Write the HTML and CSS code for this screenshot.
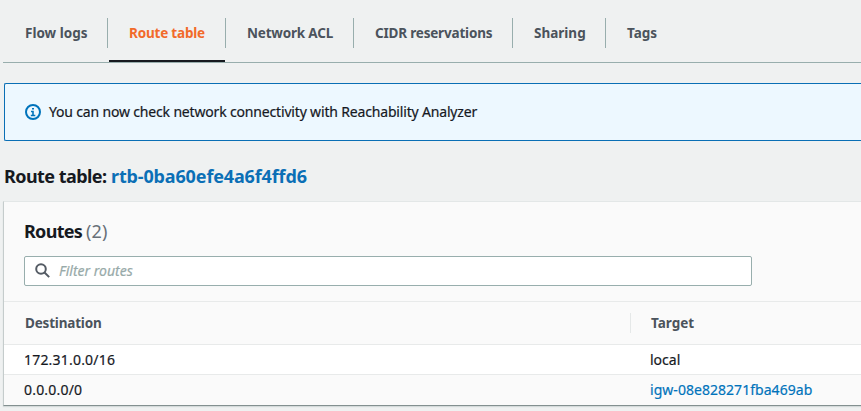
FILE: index.html
```html
<!DOCTYPE html>
<html lang="en">
<head>
<meta charset="utf-8">
<title>Route table</title>
<link rel="stylesheet" href="styles.css">
</head>
<body>
<nav class="tabs">
  <a class="tab"><span>Flow logs</span></a>
  <a class="tab active"><span class="tight">Route table</span></a>
  <a class="tab"><span class="tight">Network ACL</span></a>
  <a class="tab"><span class="tight">CIDR reservations</span></a>
  <a class="tab"><span>Sharing</span></a>
  <a class="tab"><span>Tags</span></a>
</nav>
<div class="notice">
  <svg class="info" width="16" height="16" viewBox="0 0 16 16" fill="none" stroke="currentColor" stroke-width="2"><circle cx="8" cy="8" r="7"/><path d="M6 7.5h2V11M5.8 11.5h4.5M7 4.8h2" stroke-width="1.6"/></svg>
  <span class="notice-text">You can now check network connectivity with Reachability Analyzer</span>
</div>
<h2 class="title"><span class="title-label">Route table:</span><a class="title-link">rtb-0ba60efe4a6f4ffd6</a></h2>
<section class="panel">
  <header class="panel-head">
    <h3 class="heading"><span class="heading-name">Routes</span><span class="count">(2)</span></h3>
    <div class="search">
      <svg width="16" height="16" viewBox="0 0 16 16" fill="none" stroke="currentColor" stroke-width="2"><circle cx="6" cy="6" r="4.8"/><path d="M9.5 9.5l4.7 4.6"/></svg>
      <span class="placeholder">Filter routes</span>
    </div>
  </header>
  <div class="row head"><div class="cell"><span class="tight">Destination</span></div><div class="cell target"><span>Target</span></div></div>
  <div class="row"><div class="cell"><span class="address">172.31.0.0/16</span></div><div class="cell"><span>local</span></div></div>
  <div class="row last"><div class="cell"><span class="address">0.0.0.0/0</span></div><div class="cell"><a class="igw">igw-08e828271fba469ab</a></div></div>
</section>
</body>
</html>
```
FILE: styles.css
```css
* { box-sizing: border-box; }
body { margin: 0; height: 411px; overflow: hidden; background: #eff1f1; color: #16191f; font: 14px/20px "Noto Sans", sans-serif; }
.tabs { display: grid; grid-template-columns: 105px 118px 128px 159px 93px 1fr; height: 63px; margin-left: 3px; border-bottom: 1px solid #98aead; }
.tab { display: flex; align-items: center; height: 63px; padding: 2px 0 0 21px; color: #4b535c; font-weight: 700; font-size: 13.5px; white-space: nowrap; background: linear-gradient(#98aead, #98aead) right 18px / 1px 30px no-repeat; }
.tab:first-child { padding-left: 22px; }
.tab:last-child { background: none; }
.active { color: #f26a2a; background: linear-gradient(#98aead, #98aead) right 18px / 1px 30px no-repeat, linear-gradient(#16191f, #16191f) 1px 60px / 116px 2px no-repeat; }
.tight { letter-spacing: -0.19px; }
.notice { display: flex; align-items: center; height: 58px; margin: 20px 0 0 4px; padding-left: 20px; border: 1px solid #0a6fb5; border-right: 0; border-radius: 2px 0 0 2px; background: #edf8ff; white-space: nowrap; }
.notice-text { letter-spacing: -0.17px; -webkit-text-stroke: 0.2px; }
.info { margin-right: 8px; color: #0073bb; }
.title { display: flex; margin: 24px 0 0 4px; font-size: 18px; line-height: 22px; font-weight: 700; white-space: nowrap; }
.title-label { width: 107px; letter-spacing: -0.55px; }
.title-link { color: #0b6fb6; letter-spacing: -0.14px; }
.panel { margin: 14px 0 0 3px; height: 205px; border-top: 1px solid #e3e7e7; border-left: 1px solid #c5cccc; border-bottom: 1px solid #839090; background: #fafafa; box-shadow: 0 1px 1px #d4dada; }
.panel-head { height: 99px; padding: 17px 0 0 20px; }
.heading { display: flex; margin: 0; height: 24px; font-size: 18px; line-height: 24px; }
.heading-name { width: 62px; letter-spacing: -0.7px; }
.count { color: #687078; font-weight: 400; letter-spacing: 0.2px; }
.search { display: flex; align-items: center; width: 728px; height: 30px; margin-top: 13px; padding-left: 10px; border: 1px solid #98aead; border-radius: 2px; background: #fff; color: #545b64; }
.placeholder { margin-left: 8px; color: #98aaa9; font-style: italic; -webkit-text-stroke: 0.2px; }
.row { display: grid; grid-template-columns: 626px 1fr; height: 30px; align-items: center; border-top: 1px solid #e8eaea; background: #fff; -webkit-text-stroke: 0.2px; }
.cell { padding-left: 20px; white-space: nowrap; }
.head { height: 43px; background: #fafafa; color: #4b535c; font-weight: 700; font-size: 13.5px; -webkit-text-stroke: 0; }
.head .cell { padding-left: 21px; }
.head .target { border-left: 1px solid #e5e8e8; padding-left: 20px; }
.last { background: #fafafa; }
.address { letter-spacing: 0.2px; }
.igw { color: #0073bb; letter-spacing: 0.04px; }
```
